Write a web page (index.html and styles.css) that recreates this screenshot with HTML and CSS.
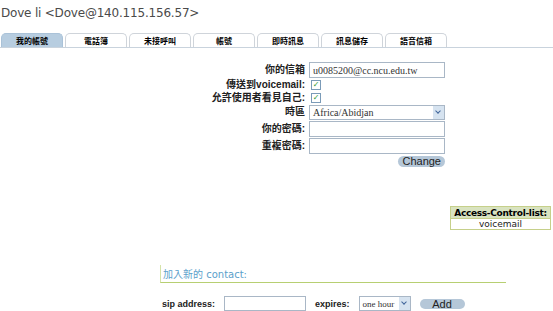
FILE: index.html
```html
<!DOCTYPE html>
<html lang="zh-Hant">
<head>
  <meta charset="UTF-8" />
  <title>Dove li</title>
  <link rel="stylesheet" href="styles.css">
</head>
<body>

  <div class="title">Dove li &lt;Dove@140.115.156.57&gt;</div>

  <ul class="tabs">
    <li class="active">我的帳號</li>
    <li>電話簿</li>
    <li>未接呼叫</li>
    <li>帳號</li>
    <li>即時訊息</li>
    <li>訊息儲存</li>
    <li>語音信箱</li>
  </ul>

  <div class="account-form">
    <label>你的信箱</label>
    <input type="text" class="field" value="u0085200@cc.ncu.edu.tw" />
    <label>傳送到voicemail:</label>
    <span class="check">&#10003;</span>
    <label>允許使用者看見自己:</label>
    <span class="check">&#10003;</span>
    <label>時區</label>
    <div class="select wide"><span>Africa/Abidjan</span><i class="arrow"></i></div>
    <label>你的密碼:</label>
    <input type="password" class="field" />
    <label>重複密碼:</label>
    <input type="password" class="field" />
    <span></span>
    <div class="btn-row"><button class="pill">Change</button></div>
  </div>

  <div class="acl-wrap">
    <table class="acl">
      <tr><th>Access-Control-list:</th></tr>
      <tr><td>voicemail</td></tr>
    </table>
  </div>

  <div class="contact">
    <h3>加入新的 contact:</h3>
    <div class="contact-row">
      <label>sip address:</label>
      <input type="text" class="sip" />
      <label>expires:</label>
      <div class="select small"><span>one hour</span><i class="arrow"></i></div>
      <button class="pill add">Add</button>
    </div>
  </div>

</body>
</html>
```

FILE: styles.css
```css
body {
  margin: 0;
  padding: 0;
  background: #fff;
  color: #000;
  font-family: "DejaVu Sans", "Noto Sans CJK TC", sans-serif;
  overflow: hidden;
}

.title {
  font-size: 12px;
  color: #4a4a4a;
  padding: 6px 0 0 1px;
  height: 21px;
  letter-spacing: -0.2px;
}

.tabs {
  list-style: none;
  margin: 0;
  padding: 0 0 0 1px;
  display: flex;
  gap: 2px;
  border-bottom: 1px solid #c9d3dd;
  height: 20px;
  align-items: flex-end;
}

.tabs li {
  width: 60px;
  height: 13px;
  border: 1px solid #cfd4da;
  border-bottom: none;
  border-radius: 5px 5px 0 0;
  font-size: 8px;
  font-weight: bold;
  text-align: center;
  line-height: 14px;
  font-family: "Noto Sans CJK TC", sans-serif;
  background: #fff;
}

.tabs li.active {
  background: #b7cde0;
  border-color: #aac2d8;
}

.account-form {
  display: grid;
  grid-template-columns: 305px 136px;
  grid-template-rows: 16px 13px 13px 16px 17px 18px 12px;
  column-gap: 4px;
  margin-top: 14px;
  align-items: center;
}

.account-form label {
  text-align: right;
  font-family: "Liberation Sans", "Noto Sans CJK TC", sans-serif;
  font-size: 10px;
  line-height: 12px;
  font-weight: bold;
  color: #222;
}

.field {
  box-sizing: border-box;
  width: 136px;
  height: 16px;
  margin: 0;
  border: 1px solid #a9b7c6;
  padding: 0 3px;
  font-family: "Liberation Serif", serif;
  font-size: 10px;
  color: #333;
}

.check {
  box-sizing: border-box;
  width: 10px;
  height: 10px;
  border: 1px solid #7b9bb8;
  font-size: 8px;
  line-height: 8px;
  color: #2e9a2e;
  text-align: center;
  font-weight: bold;
  margin-left: 2px;
}

.select {
  box-sizing: border-box;
  height: 15px;
  border: 1px solid #a9b7c6;
  display: flex;
  align-items: center;
  justify-content: space-between;
  padding-left: 3px;
  font-family: "Liberation Serif", serif;
  font-size: 10px;
  color: #333;
}

.select.wide { width: 136px; }

.select.small {
  width: 52px;
  height: 15px;
  font-size: 9px;
}

.arrow {
  width: 11px;
  height: 13px;
  background: #d6e3f0;
  position: relative;
}

.arrow::after {
  content: "";
  position: absolute;
  left: 3px;
  top: 3px;
  width: 3px;
  height: 3px;
  border-right: 1.5px solid #41659a;
  border-bottom: 1.5px solid #41659a;
  transform: rotate(45deg);
}

.btn-row {
  display: flex;
  justify-content: flex-end;
}

.pill {
  border: none;
  background: #b5c7d8;
  border-radius: 6px;
  font-family: "Liberation Sans", sans-serif;
  font-size: 11px;
  color: #222;
  padding: 0 4px;
  height: 11px;
  line-height: 11px;
}

.acl-wrap {
  display: flex;
  justify-content: flex-end;
  margin-top: 39px;
  padding-right: 2px;
}

.acl {
  border-collapse: collapse;
  width: 101px;
  font-size: 9px;
  border: 1px solid #c6d08a;
  white-space: nowrap;
}

.acl th {
  background: #d9e3c0;
  font-weight: bold;
  padding: 1px 0 0;
  border-bottom: 1px solid #c6d08a;
  height: 10px;
  line-height: 10px;
  letter-spacing: -0.3px;
}

.acl td {
  text-align: center;
  height: 10px;
  line-height: 10px;
  padding: 0;
  color: #222;
}

.contact {
  margin-left: 160px;
  margin-top: 35px;
}

.contact h3 {
  width: 343px;
  margin: 0;
  font-size: 10px;
  line-height: 12px;
  font-weight: normal;
  color: #5b9fcb;
  border-left: 1px solid #d5e3a8;
  border-bottom: 1px solid #b7cf72;
  padding: 4px 0 1px 2px;
}

.contact-row {
  display: flex;
  align-items: center;
  gap: 9px;
  margin-top: 13px;
  padding-left: 2px;
}

.contact-row label {
  font-family: "Liberation Sans", sans-serif;
  font-size: 9px;
  line-height: 12px;
  font-weight: bold;
  color: #222;
}

.sip {
  box-sizing: border-box;
  width: 82px;
  height: 15px;
  margin: 0;
  border: 1px solid #a9b7c6;
}

.pill.add {
  width: 45px;
  height: 10px;
  font-size: 11px;
}
```
